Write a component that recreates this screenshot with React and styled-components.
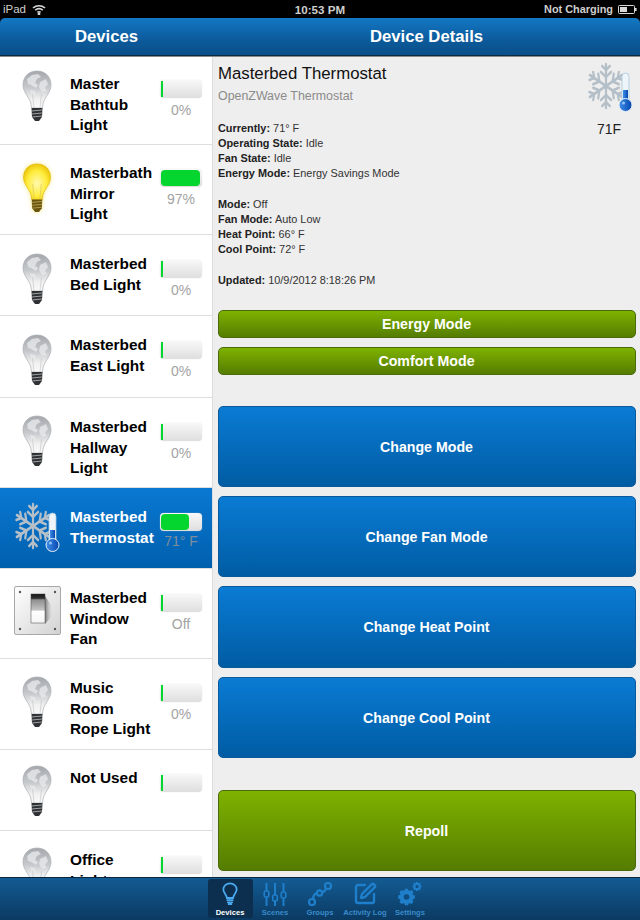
import React from 'react';
import styled, { createGlobalStyle } from 'styled-components';
import { SquarePen } from 'lucide-react';

const GlobalStyle = createGlobalStyle`
  html, body {
    margin: 0;
    padding: 0;
    background: #000;
    font-family: "Liberation Sans", Arial, sans-serif;
  }
`;

const devices = [
  { name: ['Master', 'Bathtub', 'Light'], icon: 'bulb', level: 0, value: '0%', h: 88, pad: 17, iconTop: 13 },
  { name: ['Masterbath', 'Mirror', 'Light'], icon: 'lit', level: 97, value: '97%', h: 90, pad: 18, iconTop: 18 },
  { name: ['Masterbed', 'Bed Light'], icon: 'bulb', level: 0, value: '0%', h: 81, pad: 19, iconTop: 18 },
  { name: ['Masterbed', 'East Light'], icon: 'bulb', level: 0, value: '0%', h: 82, pad: 19, iconTop: 18 },
  { name: ['Masterbed', 'Hallway', 'Light'], icon: 'bulb', level: 0, value: '0%', h: 90, pad: 19, iconTop: 17 },
  { name: ['Masterbed', 'Thermostat'], icon: 'thermo', level: 71, value: '71° F', h: 81, pad: 19, iconTop: 13, active: true },
  { name: ['Masterbed', 'Window', 'Fan'], icon: 'switch', level: 0, value: 'Off', h: 90, pad: 19, iconTop: 17 },
  { name: ['Music', 'Room', 'Rope Light'], icon: 'bulb', level: 0, value: '0%', h: 91, pad: 19, iconTop: 17 },
  { name: ['Not Used'], icon: 'bulb', level: 0, value: '', h: 81, pad: 18, iconTop: 15 },
  { name: ['Office', 'Light'], icon: 'bulb', level: 0, value: '', h: 90, pad: 19, iconTop: 16 },
];

const detailBlocks = [
  [['Currently:', '71° F'], ['Operating State:', 'Idle'], ['Fan State:', 'Idle'], ['Energy Mode:', 'Energy Savings Mode']],
  [['Mode:', 'Off'], ['Fan Mode:', 'Auto Low'], ['Heat Point:', '66° F'], ['Cool Point:', '72° F']],
  [['Updated:', '10/9/2012 8:18:26 PM']],
];

const Screen = styled.div`
  width: 640px;
  height: 920px;
  display: flex;
  flex-direction: column;
  overflow: hidden;
  background: #000;
`;

const StatusBar = styled.div`
  height: 18px;
  flex: none;
  display: grid;
  grid-template-columns: 1fr auto 1fr;
  align-items: center;
  padding: 0 3px;
  color: #cfcfcf;
  font-size: 11.5px;
`;

const StatusLeft = styled.div`
  display: flex;
  align-items: center;
  gap: 6px;
`;

const StatusRight = styled.div`
  display: flex;
  align-items: center;
  justify-content: flex-end;
  gap: 5px;
  font-weight: 700;
  font-size: 10.9px;
`;

const Clock = styled.div`
  font-weight: 700;
  font-size: 11.6px;
`;

const NavBar = styled.div`
  height: 38px;
  flex: none;
  box-sizing: border-box;
  display: flex;
  align-items: center;
  border-radius: 5px 5px 0 0;
  background: linear-gradient(#1378c4, #0c5a9b 60%, #0a4f89);
  border-bottom: 1px solid #0b2a44;
  color: #fff;
  font-size: 16.7px;
  font-weight: 700;
`;

const NavTitle = styled.div`
  text-align: center;
  width: ${(p) => p.$width}px;
`;

const Body = styled.div`
  flex: 1;
  min-height: 0;
  display: flex;
  border-top: 1px solid #8a8a8a;
`;

const List = styled.div`
  width: 212px;
  flex: none;
  overflow: hidden;
  background: #fff;
  border-right: 1px solid #dcdcdc;
`;

const Row = styled.div`
  height: ${(p) => p.$h}px;
  box-sizing: border-box;
  display: flex;
  align-items: flex-start;
  border-bottom: 1px solid #dedede;
  color: ${(p) => (p.$active ? '#fff' : '#000')};
  background: ${(p) => (p.$active ? 'linear-gradient(#0a78d2, #0060ae)' : '#fff')};
`;

const IconSlot = styled.div`
  width: 70px;
  flex: none;
  box-sizing: border-box;
  padding: ${(p) => p.$top}px 0 0 4px;
  display: flex;
  justify-content: center;
`;

const Name = styled.div`
  width: 90px;
  flex: none;
  padding-top: ${(p) => p.$pad}px;
  font-size: 15.4px;
  line-height: 20.6px;
  font-weight: 700;
  white-space: nowrap;
`;

const Meter = styled.div`
  width: 42px;
  flex: none;
  padding-top: ${(p) => p.$pad + 6}px;
  text-align: center;
`;

const Track = styled.div`
  height: 18px;
  box-sizing: border-box;
  padding: 1px;
  border-radius: 4px;
  overflow: hidden;
  background: linear-gradient(#f8f8f8, #dedede);
  box-shadow: 0 0 1px #ccc;
`;

const Fill = styled.div`
  height: 100%;
  min-width: 2px;
  background: #05d52f;
  border-radius: ${(p) => (p.$level > 0 ? '4px' : '0')};
`;

const Value = styled.div`
  margin-top: ${(p) => (p.$active ? 2 : 4)}px;
  font-size: 14px;
  color: ${(p) => (p.$active ? '#7e8d9c' : '#a3a3a3')};
  white-space: nowrap;
`;

const Detail = styled.div`
  flex: 1;
  min-width: 0;
  background: #eeeeee;
  padding: 6px 4px 0 5px;
  display: flex;
  flex-direction: column;
  overflow: hidden;
`;

const DetailHead = styled.div`
  display: flex;
  justify-content: space-between;
  height: 58px;
  flex: none;
`;

const DeviceTitle = styled.div`
  font-size: 16.8px;
  line-height: 21px;
  color: #111;
`;

const DeviceType = styled.div`
  margin-top: 5px;
  font-size: 12.4px;
  line-height: 15px;
  color: #8b8b8b;
`;

const TempBox = styled.div`
  width: 52px;
  margin-top: -2px;
  padding-right: 2px;
  box-sizing: border-box;
  text-align: center;
  font-size: 14px;
  line-height: 16px;
  color: #222;
  svg {
    display: block;
    margin-bottom: 8px;
  }
`;

const InfoBlock = styled.div`
  font-size: 10.9px;
  line-height: 15.1px;
  color: #333;
  margin-bottom: 15.6px;
  b {
    color: #222;
  }
`;

const ActionGroup = styled.div`
  display: flex;
  flex-direction: column;
  gap: ${(p) => p.$gap}px;
  margin-top: ${(p) => p.$top}px;
`;

const Action = styled.div`
  height: ${(p) => p.$h}px;
  box-sizing: border-box;
  display: flex;
  align-items: center;
  justify-content: center;
  padding: 1px 1px 0 0;
  border-radius: 5px;
  color: #fff;
  font-size: 14.2px;
  font-weight: 700;
  background: ${(p) =>
    p.$green
      ? 'linear-gradient(#7eb200, #557c00)'
      : 'linear-gradient(#0a7bd4, #005ca3)'};
  border: 1px solid ${(p) => (p.$green ? '#4b6a0a' : '#0a5a9c')};
`;

const TabBar = styled.div`
  height: 43px;
  flex: none;
  box-sizing: border-box;
  display: flex;
  justify-content: center;
  background: linear-gradient(#135b93, #0b3a62);
  border-top: 1px solid #08263f;
`;

const Tab = styled.div`
  width: 45px;
  height: 39px;
  margin-top: 1px;
  box-sizing: border-box;
  display: flex;
  flex-direction: column;
  align-items: center;
  justify-content: flex-end;
  border-radius: 3px;
  background: ${(p) => (p.$active ? '#0c2f4f' : 'transparent')};
  color: ${(p) => (p.$active ? '#fff' : '#3a8bca')};
  font-size: 7.6px;
  font-weight: 700;
  line-height: 11px;
  white-space: nowrap;
`;

const TabIcon = styled.div`
  height: 26px;
  display: flex;
  align-items: center;
  justify-content: center;
  color: ${(p) => (p.$active ? '#4aa8ee' : '#1f7fca')};
`;

const Wifi = () => (
  <svg width="14" height="11" viewBox="0 0 14 11" fill="none" stroke="#d8d8d8" strokeWidth="1.6">
    <path d="M1 4 a9 9 0 0 1 12 0" />
    <path d="M3.2 6.2 a6 6 0 0 1 7.6 0" />
    <path d="M5.4 8.3 a3 3 0 0 1 3.2 0" />
    <circle cx="7" cy="10" r=".6" fill="#d8d8d8" />
  </svg>
);

const Battery = () => (
  <svg width="19" height="9" viewBox="0 0 19 9">
    <rect x=".5" y=".5" width="16" height="8" rx="1" fill="none" stroke="#d8d8d8" />
    <rect x="2" y="2" width="7" height="5" fill="#d8d8d8" />
    <rect x="17" y="3" width="1.6" height="3" fill="#d8d8d8" />
  </svg>
);

const BULB_GLASS = 'M15 1 C6.5 1 1 7 1 15 C1 22 6.5 26 8.8 33 L9.5 38 L20.5 38 L21.2 33 C23.5 26 29 22 29 15 C29 7 23.5 1 15 1 Z';

const GrayBulb = () => (
  <svg width="30" height="52" viewBox="0 0 30 52">
    <defs>
      <linearGradient id="grayGlass" x1="0" y1="0" x2="0" y2="1">
        <stop offset="0" stopColor="#a4a8ad" />
        <stop offset=".45" stopColor="#c6c9cc" />
        <stop offset=".75" stopColor="#f0f0f0" />
        <stop offset="1" stopColor="#fafafa" />
      </linearGradient>
    </defs>
    <path d={BULB_GLASS} fill="url(#grayGlass)" stroke="#a9adb1" strokeWidth=".7" />
    <path
      d="M5 9 L10 5 L16 4 L19 7 L15 9 L13 13 L16 15 L14 18 L9 15 L6 14 Z M18 12 L24 9 L26 14 L23 18 L25 21 L20 22 L17 17 Z M8 20 L13 21 L14 25 L10 27 Z"
      fill="#e6e8ea"
      opacity=".8"
    />
    <path d="M12 38 L10.5 24 M18 38 L19.5 24" stroke="#c2c2c2" strokeWidth=".6" fill="none" />
    <path d="M9.5 38 L20.5 38 L20 47 L17 51 L13 51 L10 47 Z" fill="#2f3234" />
    <path d="M9.7 41 L20.3 40 M9.8 44 L20.2 43 M10 47 L20 46" stroke="#bdbdbd" strokeWidth=".8" />
  </svg>
);

const LitBulb = () => (
  <svg width="30" height="50" viewBox="0 0 30 52" style={{ filter: 'drop-shadow(0 0 2px #f5e47a)' }}>
    <defs>
      <radialGradient id="litGlass" cx="50%" cy="55%" r="60%">
        <stop offset="0" stopColor="#fff9b0" />
        <stop offset=".6" stopColor="#ffec3c" />
        <stop offset="1" stopColor="#e8be00" />
      </radialGradient>
    </defs>
    <path d={BULB_GLASS} fill="url(#litGlass)" stroke="#dcb400" strokeWidth=".6" />
    <path d="M12 38 L10.5 22 M18 38 L19.5 22" stroke="#dcc65a" strokeWidth=".7" fill="none" />
    <path d="M9.5 38 L20.5 38 L20 47 L17 51 L13 51 L10 47 Z" fill="#6b5410" />
    <path d="M9.7 41 L20.3 40 M9.8 44 L20.2 43 M10 47 L20 46" stroke="#c7ae5c" strokeWidth=".8" />
  </svg>
);

const ThermoIcon = ({ id }) => (
  <svg width="52" height="52" viewBox="0 0 52 52">
    <defs>
      <linearGradient id={id} x1="0" y1="0" x2="1" y2="0">
        <stop offset="0" stopColor="#3f8fe8" />
        <stop offset="1" stopColor="#0646b0" />
      </linearGradient>
    </defs>
    <g
      transform="translate(22 25) scale(.85 1) translate(-22 -25)"
      stroke="#b4bfc8"
      strokeWidth="2.6"
      strokeLinecap="round"
      fill="none"
    >
      {[0, 60, 120, 180, 240, 300].map((a) => (
        <g key={a} transform={`rotate(${a} 22 25)`}>
          <path d="M22 25 L22 3" />
          <path d="M22 9 L17.5 5 M22 9 L26.5 5" />
          <path d="M22 16 L16 11 M22 16 L28 11" />
        </g>
      ))}
    </g>
    <rect x="38" y="12" width="7" height="32" rx="3.5" fill="#eef5fa" stroke="#a8c6dc" strokeWidth=".8" />
    <rect x="39" y="29" width="5" height="14" fill={`url(#${id})`} />
    <circle cx="41.5" cy="44" r="6.5" fill={`url(#${id})`} stroke="#e6f0f8" strokeWidth="1" />
    <circle cx="39.5" cy="42" r="1.6" fill="#8fc0f2" />
  </svg>
);

const SwitchIcon = () => (
  <svg width="47" height="49" viewBox="0 0 47 49">
    <defs>
      <linearGradient id="plate" x1="0" y1="0" x2="1" y2="1">
        <stop offset="0" stopColor="#ffffff" />
        <stop offset="1" stopColor="#d2d2d2" />
      </linearGradient>
      <linearGradient id="toggle" x1="0" y1="0" x2="0" y2="1">
        <stop offset="0" stopColor="#161616" />
        <stop offset=".15" stopColor="#333" />
        <stop offset=".2" stopColor="#8f8f8f" />
        <stop offset=".55" stopColor="#c4c4c4" />
        <stop offset=".6" stopColor="#fff" />
        <stop offset="1" stopColor="#f4f4f4" />
      </linearGradient>
      <linearGradient id="toggleShadow" x1="0" y1="0" x2="1" y2="0">
        <stop offset="0" stopColor="#777" />
        <stop offset="1" stopColor="#bbb" stopOpacity="0" />
      </linearGradient>
    </defs>
    <rect x=".5" y=".5" width="46" height="48" rx="1.5" fill="url(#plate)" stroke="#a8a8a8" />
    <path d="M31 10 L38 20 L38 30 L31 38 Z" fill="url(#toggleShadow)" />
    <rect x="17" y="8" width="14" height="29" fill="url(#toggle)" stroke="#444" strokeWidth=".5" />
    {[[6, 6], [41, 6], [6, 43], [41, 43]].map(([x, y]) => (
      <circle key={x + '-' + y} cx={x} cy={y} r="1.2" fill="#555" />
    ))}
  </svg>
);

const DeviceIcon = ({ type }) => {
  if (type === 'thermo') return <ThermoIcon id="rowMercury" />;
  if (type === 'switch') return <SwitchIcon />;
  if (type === 'lit') return <LitBulb />;
  return <GrayBulb />;
};

const TabBulb = () => (
  <svg width="16" height="24" viewBox="0 0 18 25" fill="none" stroke="currentColor" strokeWidth="2" strokeLinecap="round">
    <path d="M5.5 17 C5 12.5 1.5 11 1.5 7.5 A7.5 7 0 0 1 16.5 7.5 C16.5 11 13 12.5 12.5 17 Z" />
    <path d="M6 19.5 H12 M6.5 21.8 H11.5 M7.5 24 H10.5" />
  </svg>
);

const TabSliders = () => (
  <svg width="24" height="23" viewBox="0 0 24 23" stroke="currentColor" strokeWidth="2" fill="none">
    <path d="M3.5 0 V23 M12 0 V23 M20.5 0 V23" />
    <rect x="1.2" y="8" width="4.6" height="6" rx="1.5" fill="#0f4d80" strokeWidth="1.6" />
    <rect x="9.7" y="12" width="4.6" height="6" rx="1.5" fill="#0f4d80" strokeWidth="1.6" />
    <rect x="18.2" y="9" width="4.6" height="6" rx="1.5" fill="#0f4d80" strokeWidth="1.6" />
  </svg>
);

const TabGroups = () => (
  <svg width="24" height="24" viewBox="0 0 24 24" stroke="currentColor" strokeWidth="2.2" fill="none">
    <circle cx="4" cy="20" r="3" />
    <circle cx="11.5" cy="11" r="2.7" />
    <circle cx="20" cy="4" r="3" />
    <path d="M5 17 C5.5 13 7 11.5 8.8 11.2 M14.2 10.5 C16 10 17.5 8 18.2 6.5" />
  </svg>
);

const gearPath = (cx, cy, outer, inner, teeth) => {
  const step = (Math.PI * 2) / teeth;
  let d = '';
  for (let i = 0; i < teeth; i++) {
    const a = i * step;
    const pts = [
      [inner, a - step * 0.5],
      [outer, a - step * 0.22],
      [outer, a + step * 0.22],
      [inner, a + step * 0.5],
    ];
    pts.forEach(([r, t], j) => {
      const x = (cx + r * Math.cos(t)).toFixed(2);
      const y = (cy + r * Math.sin(t)).toFixed(2);
      d += `${i === 0 && j === 0 ? 'M' : 'L'}${x} ${y} `;
    });
  }
  return d + 'Z';
};

const TabGears = () => (
  <svg width="24" height="24" viewBox="0 0 24 24" fill="currentColor">
    <path d={gearPath(8.5, 15, 8.5, 6.4, 8)} />
    <circle cx="8.5" cy="15" r="2.8" fill="#0f4d80" />
    <path d={gearPath(19, 4.5, 4.6, 3.4, 8)} />
    <circle cx="19" cy="4.5" r="1.5" fill="#0f4d80" />
  </svg>
);

const tabs = [
  { label: 'Devices', icon: <TabBulb />, active: true },
  { label: 'Scenes', icon: <TabSliders /> },
  { label: 'Groups', icon: <TabGroups /> },
  { label: 'Activity Log', icon: <SquarePen size={24} strokeWidth={2.4} /> },
  { label: 'Settings', icon: <TabGears /> },
];

export default function App() {
  return (
    <Screen>
      <GlobalStyle />
      <StatusBar>
        <StatusLeft>
          iPad <Wifi />
        </StatusLeft>
        <Clock>10:53 PM</Clock>
        <StatusRight>
          Not Charging <Battery />
        </StatusRight>
      </StatusBar>
      <NavBar>
        <NavTitle $width={213}>Devices</NavTitle>
        <NavTitle $width={427}>Device Details</NavTitle>
      </NavBar>
      <Body>
        <List>
          {devices.map((d) => (
            <Row key={d.name.join(' ')} $h={d.h} $active={d.active}>
              <IconSlot $top={d.iconTop}>
                <DeviceIcon type={d.icon} />
              </IconSlot>
              <Name $pad={d.pad}>
                {d.name.map((line) => (
                  <div key={line}>{line}</div>
                ))}
              </Name>
              <Meter $pad={d.pad}>
                <Track>
                  <Fill $level={d.level} style={{ width: `${d.level}%` }} />
                </Track>
                <Value $active={d.active}>{d.value}</Value>
              </Meter>
            </Row>
          ))}
        </List>
        <Detail>
          <DetailHead>
            <div>
              <DeviceTitle>Masterbed Thermostat</DeviceTitle>
              <DeviceType>OpenZWave Thermostat</DeviceType>
            </div>
            <TempBox>
              <ThermoIcon id="headMercury" />
              71F
            </TempBox>
          </DetailHead>
          {detailBlocks.map((block) => (
            <InfoBlock key={block[0][0]}>
              {block.map(([k, v]) => (
                <div key={k}>
                  <b>{k}</b> {v}
                </div>
              ))}
            </InfoBlock>
          ))}
          <ActionGroup $gap={9} $top={6}>
            <Action $green $h={28}>Energy Mode</Action>
            <Action $green $h={28}>Comfort Mode</Action>
          </ActionGroup>
          <ActionGroup $gap={9} $top={31}>
            <Action $h={81}>Change Mode</Action>
            <Action $h={81}>Change Fan Mode</Action>
            <Action $h={82}>Change Heat Point</Action>
            <Action $h={81}>Change Cool Point</Action>
          </ActionGroup>
          <ActionGroup $gap={0} $top={32}>
            <Action $green $h={81}>Repoll</Action>
          </ActionGroup>
        </Detail>
      </Body>
      <TabBar>
        {tabs.map((t) => (
          <Tab key={t.label} $active={t.active}>
            <TabIcon $active={t.active}>{t.icon}</TabIcon>
            {t.label}
          </Tab>
        ))}
      </TabBar>
    </Screen>
  );
}
